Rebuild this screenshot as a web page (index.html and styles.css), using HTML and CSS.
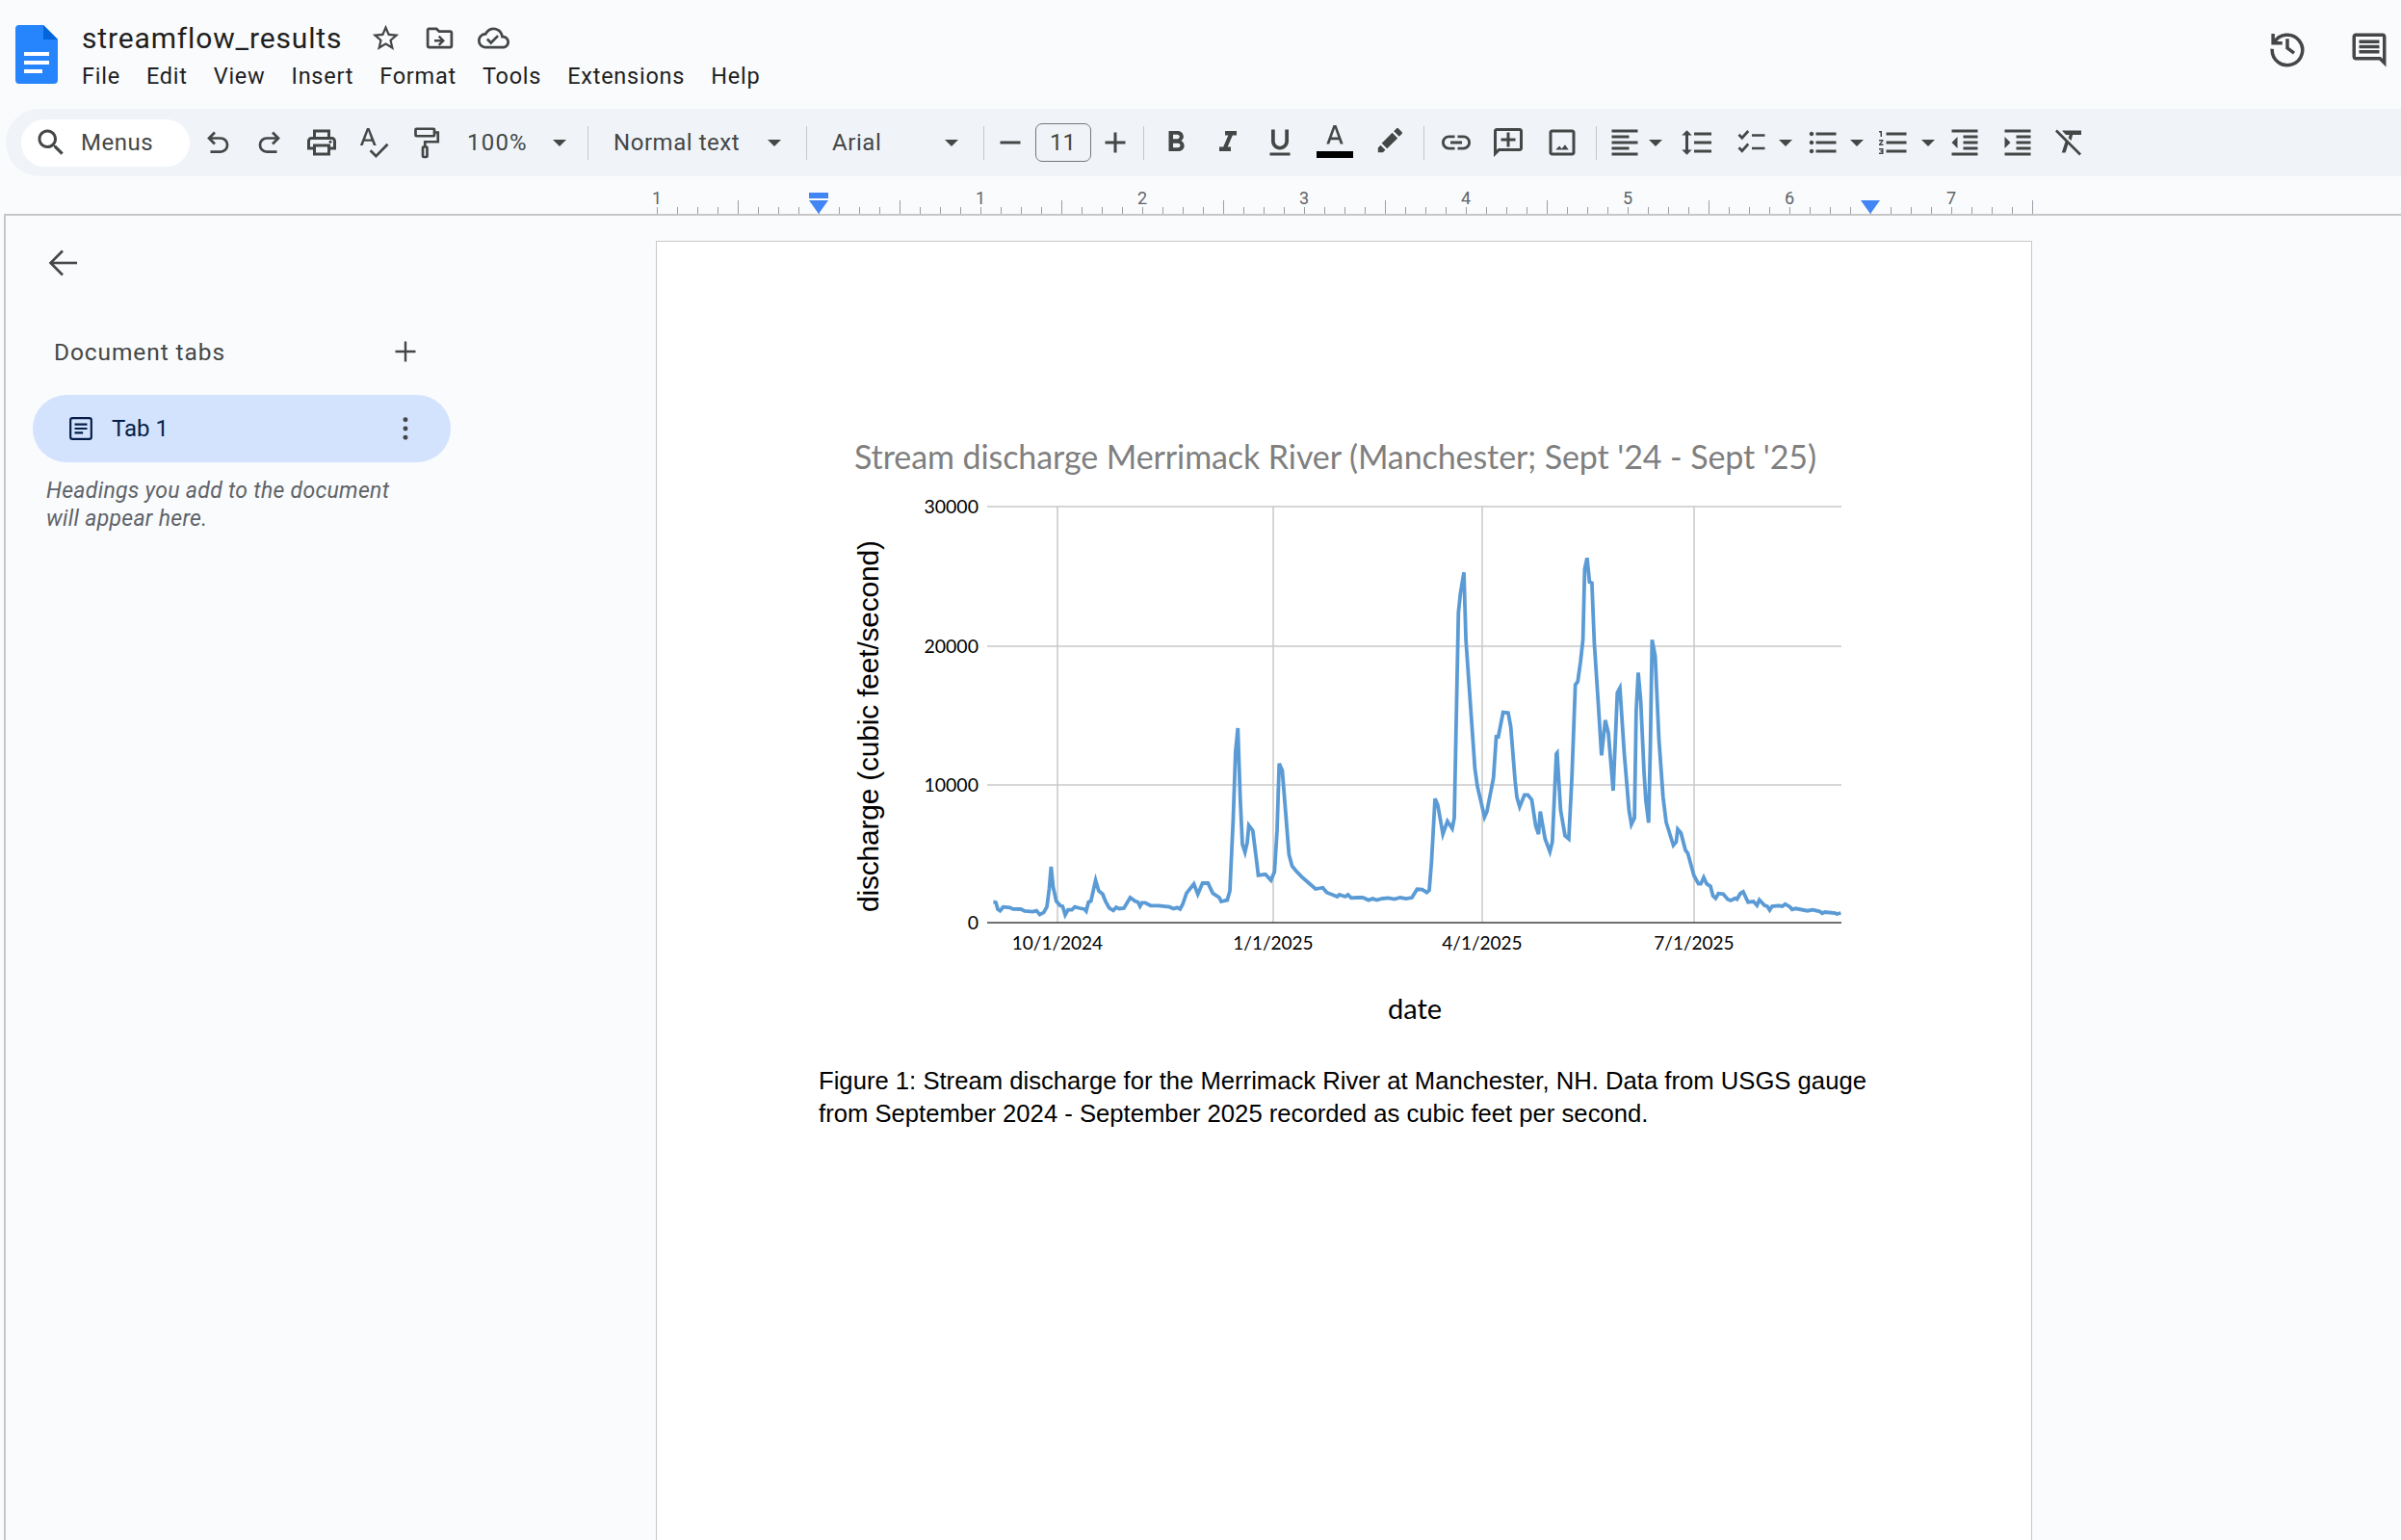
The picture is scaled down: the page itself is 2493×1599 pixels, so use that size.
FILE: index.html
```html
<!DOCTYPE html>
<html lang="en">
<head>
  <meta charset="UTF-8" />
  <title>streamflow_results</title>
  <link rel="stylesheet" href="styles.css">
</head>
<body>
  <header class="topbar">
    <svg class="doc-logo" viewBox="0 0 44 61">
      <path d="M4 0h25l15 15v42a4 4 0 0 1-4 4H4a4 4 0 0 1-4-4V4a4 4 0 0 1 4-4z" fill="#2684fc"/>
      <path d="M29 0l15 15H29z" fill="#0066da"/>
      <rect x="9" y="28" width="26" height="4" fill="#fff"/>
      <rect x="9" y="37" width="26" height="4" fill="#fff"/>
      <rect x="9" y="46" width="19" height="4" fill="#fff"/>
    </svg>
    <div class="title-block">
      <div class="title-row">
        <span class="doc-title">streamflow_results</span>
        <svg class="title-icon" viewBox="0 0 24 24"><path d="M22 9.24l-7.19-.62L12 2 9.19 8.63 2 9.24l5.46 4.73L5.82 21 12 17.27 18.18 21l-1.63-7.03L22 9.24zM12 15.4l-3.76 2.27 1-4.28-3.32-2.88 4.38-.38L12 6.1l1.71 4.04 4.38.38-3.32 2.88 1 4.28L12 15.4z"/></svg>
        <svg class="title-icon" viewBox="0 0 24 24"><path d="M20 6h-8l-2-2H4c-1.1 0-2 .9-2 2v12c0 1.1.9 2 2 2h16c1.1 0 2-.9 2-2V8c0-1.1-.9-2-2-2zm0 12H4V6h5.17l2 2H20v10z"/><path d="M12 10l-1.2 1.2 1.9 1.9H8v1.8h4.7l-1.9 1.9L12 18l4-4z"/></svg>
        <svg class="title-icon" viewBox="0 0 24 24"><path d="M19.35 10.04C18.67 6.59 15.64 4 12 4 9.11 4 6.6 5.64 5.35 8.04 2.34 8.36 0 10.91 0 14c0 3.31 2.69 6 6 6h13c2.76 0 5-2.24 5-5 0-2.64-2.05-4.78-4.65-4.96zM19 18H6c-2.21 0-4-1.79-4-4 0-2.05 1.53-3.76 3.56-3.97l1.07-.11.5-.95C8.08 7.14 9.94 6 12 6c2.62 0 4.88 1.86 5.39 4.43l.3 1.5 1.53.11c1.56.1 2.78 1.41 2.78 2.96 0 1.65-1.35 3-3 3zm-9-3.82l-2.09-2.09L6.5 13.5 10 17l6.01-6.01-1.41-1.41z"/></svg>
      </div>
      <nav class="menu">
        <span>File</span><span>Edit</span><span>View</span><span>Insert</span><span>Format</span><span>Tools</span><span>Extensions</span><span>Help</span>
      </nav>
    </div>
    <div class="top-right">
      <svg class="top-icon line" viewBox="0 0 24 24" stroke-width="2"><path d="M3.5 4v5.5H9"/><path d="M4 9.5A9 9 0 1 1 3 13"/><path d="M12 7v5.5l4 3"/></svg>
      <svg class="top-icon" viewBox="0 0 24 24"><path d="M21.99 4c0-1.1-.89-2-1.99-2H4c-1.1 0-2 .9-2 2v12c0 1.1.9 2 2 2h14l4 4-.01-18zM20 4v13.17L18.83 16H4V4h16zM6 12h12v2H6zm0-3h12v2H6zm0-3h12v2H6z"/></svg>
    </div>
  </header>

  <div class="toolbar">
    <div class="menus-pill">
      <svg class="icon" viewBox="0 0 24 24"><path d="M15.5 14h-.79l-.28-.27C15.41 12.59 16 11.11 16 9.5 16 5.91 13.09 3 9.5 3S3 5.91 3 9.5 5.91 16 9.5 16c1.61 0 3.09-.59 4.23-1.57l.27.28v.79l5 4.99L20.49 19l-4.99-5zm-6 0C7.01 14 5 11.99 5 9.5S7.01 5 9.5 5 14 7.01 14 9.5 11.99 14 9.5 14z"/></svg>
      <span>Menus</span>
    </div>
    <div class="tb"><svg class="icon line" viewBox="0 0 24 24" stroke-width="1.8"><path d="M10 5L6 9l4 4"/><path d="M6 9h8a4.7 4.7 0 0 1 0 9.4H7"/></svg></div>
    <div class="tb"><svg class="icon line" viewBox="0 0 24 24" stroke-width="1.8"><path d="M14 5l4 4-4 4"/><path d="M18 9h-8a4.7 4.7 0 0 0 0 9.4h7"/></svg></div>
    <div class="tb"><svg class="icon" viewBox="0 0 24 24"><path d="M19 8h-1V3H6v5H5c-1.66 0-3 1.34-3 3v6h4v4h12v-4h4v-6c0-1.66-1.34-3-3-3zM8 5h8v3H8V5zm8 12v2H8v-4h8v2zm2-2v-2H6v2H4v-4c0-.55.45-1 1-1h14c.55 0 1 .45 1 1v4h-2z"/><circle cx="18" cy="11.5" r="1"/></svg></div>
    <div class="tb"><svg class="icon" viewBox="0 0 24 24"><path d="M11.9 14h1.9L9 2H7.3L2.6 14h1.9l1-2.8h5.3zM6.1 9.6L8.2 4l2 5.6zM21 12.5l-7.4 7.6-3.2-3.3-1.3 1.3 4.5 4.6 8.7-8.9z"/></svg></div>
    <div class="tb"><svg class="icon line" viewBox="0 0 24 24" stroke-width="1.8"><rect x="5" y="2.5" width="13" height="5" rx=".6"/><path d="M18 5h2.5v6.5H11.5V15"/><rect x="10" y="15" width="3" height="7" rx=".6"/></svg></div>
    <div class="select select-zoom"><span>100%</span><i class="caret"></i></div>
    <i class="sep"></i>
    <div class="select select-style"><span>Normal text</span><i class="caret"></i></div>
    <i class="sep"></i>
    <div class="select select-font"><span>Arial</span><i class="caret"></i></div>
    <i class="sep"></i>
    <div class="font-size">
      <svg class="icon" viewBox="0 0 24 24"><path d="M5 11h14v2H5z"/></svg>
      <span class="size-box">11</span>
      <svg class="icon" viewBox="0 0 24 24"><path d="M19 13h-6v6h-2v-6H5v-2h6V5h2v6h6v2z"/></svg>
    </div>
    <i class="sep"></i>
    <div class="tb"><svg class="icon" viewBox="0 0 24 24"><path d="M15.6 10.79c.97-.67 1.65-1.77 1.65-2.79 0-2.26-1.75-4-4-4H7v14h7.04c2.09 0 3.71-1.7 3.71-3.79 0-1.52-.86-2.82-2.15-3.42zM10 6.5h3c.83 0 1.5.67 1.5 1.5s-.67 1.5-1.5 1.5h-3v-3zm3.5 9H10v-3h3.5c.83 0 1.5.67 1.5 1.5s-.67 1.5-1.5 1.5z"/></svg></div>
    <div class="tb"><svg class="icon" viewBox="0 0 24 24"><path d="M10 4v3h2.21l-3.42 8H6v3h8v-3h-2.21l3.42-8H18V4z"/></svg></div>
    <div class="tb"><svg class="icon" viewBox="0 0 24 24"><path d="M12 17c3.31 0 6-2.69 6-6V3h-2.5v8c0 1.93-1.57 3.5-3.5 3.5S8.5 12.93 8.5 11V3H6v8c0 3.31 2.69 6 6 6zm-7 2v2h14v-2H5z"/></svg></div>
    <div class="tb text-color">
      <svg class="icon" viewBox="0 0 24 24"><path d="M11 2L6.2 15h2l1-2.9h5.6l1 2.9h2L13 2h-2zm-1.2 8.4L12 4.2l2.2 6.2H9.8z"/></svg>
      <i class="color-bar"></i>
    </div>
    <div class="tb tb-pen"><svg class="icon" viewBox="0 0 24 24"><path d="M13.06 5.19l3.75 3.75L9.5 16.2l-3.7-3.7zm4.82 2.68l-3.75-3.75 1.83-1.83c.39-.39 1.02-.39 1.41 0l2.34 2.34c.39.39.39 1.02 0 1.41zM5 13.8l3.3 3.3L6.6 18.8H3.2v-3.2z"/></svg></div>
    <i class="sep sep-pen"></i>
    <div class="tb"><svg class="icon" viewBox="0 0 24 24"><path d="M3.9 12c0-1.71 1.39-3.1 3.1-3.1h4V7H7c-2.76 0-5 2.24-5 5s2.24 5 5 5h4v-1.9H7c-1.71 0-3.1-1.39-3.1-3.1zM8 13h8v-2H8v2zm9-6h-4v1.9h4c1.71 0 3.1 1.39 3.1 3.1s-1.39 3.1-3.1 3.1h-4V17h4c2.76 0 5-2.24 5-5s-2.24-5-5-5z"/></svg></div>
    <div class="tb"><svg class="icon" viewBox="0 0 24 24"><path d="M20 2H4c-1.1 0-2 .9-2 2v18l4-4h14c1.1 0 2-.9 2-2V4c0-1.1-.9-2-2-2zm0 14H5.17L4 17.17V4h16v12zM11 5h2v4h4v2h-4v4h-2v-4H7V9h4z"/></svg></div>
    <div class="tb tb-image"><svg class="icon" viewBox="0 0 24 24"><path d="M19 3H5c-1.1 0-2 .9-2 2v14c0 1.1.9 2 2 2h14c1.1 0 2-.9 2-2V5c0-1.1-.9-2-2-2zm0 16H5V5h14v14zm-5-5.5l-2.3 2.8-1.6-1.9L7.5 17h9z"/></svg></div>
    <i class="sep sep-image"></i>
    <div class="tb-drop drop-align"><svg class="icon" viewBox="0 0 24 24"><path d="M15 15H3v2h12v-2zm0-8H3v2h12V7zM3 13h18v-2H3v2zm0 8h18v-2H3v2zM3 3v2h18V3H3z"/></svg><i class="caret"></i></div>
    <div class="tb"><svg class="icon" viewBox="0 0 24 24"><path d="M6 7h2.5L5 3.5 1.5 7H4v10H1.5L5 20.5 8.5 17H6V7zm4-2v2h12V5H10zm0 14h12v-2H10v2zm0-6h12v-2H10v2z"/></svg></div>
    <div class="tb-drop drop-check"><svg class="icon line" viewBox="0 0 24 24" stroke-width="1.8"><path d="M3 6.5l2.2 2.3L9.5 4"/><path d="M3 15.5l2.2 2.3L9.5 13"/><path d="M12 7h9M12 16h9"/></svg><i class="caret"></i></div>
    <div class="tb-drop drop-bullet"><svg class="icon" viewBox="0 0 24 24"><path d="M4 10.5c-.83 0-1.5.67-1.5 1.5s.67 1.5 1.5 1.5 1.5-.67 1.5-1.5-.67-1.5-1.5-1.5zm0-6c-.83 0-1.5.67-1.5 1.5S3.17 7.5 4 7.5 5.5 6.83 5.5 6 4.83 4.5 4 4.5zm0 12c-.83 0-1.5.68-1.5 1.5s.68 1.5 1.5 1.5 1.5-.68 1.5-1.5-.67-1.5-1.5-1.5zM7 19h14v-2H7v2zm0-6h14v-2H7v2zm0-8v2h14V5H7z"/></svg><i class="caret"></i></div>
    <div class="tb-drop drop-num"><svg class="icon" viewBox="0 0 24 24"><path d="M2 17h2v.5H3v1h1v.5H2v1h3v-4H2v1zm1-9h1V4H2v1h1v3zm-1 3h1.8L2 13.1v.9h3v-1H3.2L5 10.9V10H2v1zm5-6v2h14V5H7zm0 14h14v-2H7v2zm0-6h14v-2H7v2z"/></svg><i class="caret"></i></div>
    <div class="tb"><svg class="icon" viewBox="0 0 24 24"><path d="M11 17h10v-2H11v2zm-8-5l4 4V8l-4 4zm0 9h18v-2H3v2zM3 3v2h18V3H3zm8 6h10V7H11v2zm0 4h10v-2H11v2z"/></svg></div>
    <div class="tb tb-indent"><svg class="icon" viewBox="0 0 24 24"><path d="M3 21h18v-2H3v2zM3 8v8l4-4-4-4zm8 9h10v-2H11v2zM3 3v2h18V3H3zm8 6h10V7H11v2zm0 4h10v-2H11v2z"/></svg></div>
    <div class="tb"><svg class="icon" viewBox="0 0 24 24"><path d="M3.27 3L2 4.27l7 7L6.5 19h2.6l1.8-5.8L18.73 21 20 19.73z"/><path d="M7 3.6v.6l2.4 2.4h2.4l-.7 2.2 1.9 1.9 1.1-4.1H20V3.6z"/></svg></div>
  </div>

  <div class="ruler">
    <div class="ruler-scale">
      <div class="ruler-nums">
        <span>1</span><span></span><span>1</span><span>2</span><span>3</span><span>4</span><span>5</span><span>6</span><span>7</span>
      </div>
      <div class="ticks"></div>
      <svg class="marker marker-left" viewBox="0 0 20 22"><rect width="20" height="6" fill="#4285f4"/><path d="M0 8h20L10 22z" fill="#4285f4"/></svg>
      <svg class="marker marker-right" viewBox="0 0 20 14"><path d="M0 0h20L10 14z" fill="#4285f4"/></svg>
    </div>
  </div>

  <main class="workspace">
    <aside class="sidebar">
      <svg class="back-arrow line" viewBox="0 0 30 28" stroke-width="2.6"><path d="M15 1.5L2.5 14 15 26.5"/><path d="M3 14h27"/></svg>
      <div class="tabs-head">
        <span>Document tabs</span>
        <svg class="icon" viewBox="0 0 24 24"><path d="M19 12.8h-6.2V19h-1.6v-6.2H5v-1.6h6.2V5h1.6v6.2H19z"/></svg>
      </div>
      <div class="tab-pill">
        <svg class="tab-doc line" viewBox="0 0 24 24" stroke-width="2"><rect x="2" y="2" width="20" height="20" rx="2"/><path d="M6 8h12M6 12h12M6 16h8"/></svg>
        <span class="tab-name">Tab 1</span>
        <svg class="tab-dots" viewBox="0 0 6 26"><circle cx="3" cy="3" r="2.7"/><circle cx="3" cy="13" r="2.7"/><circle cx="3" cy="23" r="2.7"/></svg>
      </div>
      <p class="tabs-hint">Headings you add to the document will appear here.</p>
    </aside>

    <section class="page">
      <svg class="chart" viewBox="850 450 1092 654">
        <text class="chart-title" x="887" y="486" textLength="999">Stream discharge Merrimack River (Manchester; Sept '24 - Sept '25)</text>
        <g class="grid">
          <path d="M1025 525H1912M1025 670H1912M1025 814H1912"/>
          <path d="M1098 525V957M1322 525V957M1539 525V957M1759 525V957"/>
        </g>
        <path class="axis" d="M1025 957H1912"/>
        <g class="y-labels">
          <text x="1016" y="532">30000</text>
          <text x="1016" y="677">20000</text>
          <text x="1016" y="821">10000</text>
          <text x="1016" y="964">0</text>
        </g>
        <g class="x-labels">
          <text x="1098" y="985">10/1/2024</text>
          <text x="1322" y="985">1/1/2025</text>
          <text x="1539" y="985">4/1/2025</text>
          <text x="1759" y="985">7/1/2025</text>
        </g>
        <text class="y-title" transform="translate(912 946) rotate(-90)" textLength="386">discharge (cubic feet/second)</text>
        <text class="x-title" x="1469" y="1057">date</text>
        <polyline class="flow" points="1031.4,935.4 1034,936 1036,943 1038.4,944.6 1041.6,940.7 1048.6,941.4 1051.8,942.9 1060,943 1064,945 1072.2,945.7 1076.3,944.6 1079.6,948.6 1083.7,946.4 1087,940.7 1089.4,922 1091.4,899 1093.5,920 1096.7,934.6 1100.8,939.3 1103.3,940 1106,949 1109,943.6 1113,943.6 1116,940.7 1121.2,942 1126,943 1127.8,945 1130.2,935.7 1132.7,934.6 1137.6,913 1140.8,924 1145,927.5 1147.8,934.6 1151.8,941.8 1156,944.3 1159,941 1162,942.5 1167,942 1173.5,931 1178.4,934.6 1181.6,935.7 1183.7,940 1185.7,936.4 1189,936.4 1194.7,939.3 1202.9,939.3 1214.3,940.7 1218.4,942.5 1222.4,941.4 1225.3,942.9 1228,938 1232,926.4 1239.6,916.8 1243.7,927.5 1248.6,916 1254.3,916 1259.2,926.4 1266,931 1268,935 1274.3,933.6 1277,924 1280.4,850.7 1282.9,779.3 1285.3,755 1287.8,829.3 1290,875.7 1292.7,884 1295,874 1296.7,856 1300.8,861.4 1305,895 1306.5,907.9 1313.9,906.8 1319.6,913 1323.3,904.3 1326,861.4 1328.2,791.8 1331.4,799 1334.7,840 1338.4,886.4 1341.6,898.2 1345.7,903.2 1351.8,909.6 1358.8,915.7 1366,922 1373.5,920.7 1377.6,925.7 1388.6,930 1390.6,927.9 1396.7,930 1399.6,927.9 1402.9,931.4 1409,931 1415,931 1421,933.6 1425.3,932 1429.4,933.6 1435.5,932 1441.6,931.4 1447.8,932.5 1453.9,931 1460,932 1466,931 1471.4,922.3 1476.8,922.7 1481.4,925.7 1484,923.3 1486.4,893.3 1490,828.3 1492.9,835 1498.2,865 1502.9,851.7 1507.9,859.3 1510,848.3 1514.3,635 1516.4,615 1520,593.3 1522.1,663.3 1527.9,746.7 1531.4,796.7 1533.9,815 1541.4,847.3 1543.9,841.7 1550.7,806.7 1553.6,764 1555.7,764 1560.7,738.7 1566,739.3 1568.6,753.3 1573.2,810 1575,826.7 1577.9,836.7 1582.9,824.3 1586.4,824.3 1590.4,829.3 1594.6,856.7 1597.5,865 1599.3,841.7 1604.3,870 1609.3,883.3 1611.8,873.3 1616,781.7 1616.8,780.7 1620.4,840 1625,866.7 1628.9,870 1632.1,806.7 1635.7,710 1638.2,706.7 1641,686.7 1643.6,663.3 1645.4,590 1647.9,578.3 1650.4,603.3 1652.9,604.3 1655.4,666.7 1658.9,720 1662.9,783.3 1666.8,746.7 1670,760 1675,820 1679.3,718.3 1682,713.3 1686.4,780 1691.4,840 1693.9,855 1697.1,848.3 1698.9,736.7 1701,697.3 1703.6,726.7 1707,800 1708.9,830 1711.8,853.3 1713.6,773.3 1715.4,663.3 1718.6,680 1722.5,766.7 1726.8,826.7 1730,852.7 1737.5,876.7 1740.4,873.3 1742,860 1745.4,864 1750,881.7 1752.5,885 1758.9,908.3 1763.6,916.7 1766,916.7 1769,910 1772.1,916.7 1776,919.3 1778.6,929.3 1781.4,931.7 1784.3,926.7 1789.3,927.3 1793.9,932.7 1797,934 1801.8,931.7 1803.6,932.7 1807,926.7 1810,925 1815,935.7 1820.7,935 1824.3,939 1826.8,933.3 1832.1,939 1835,940 1837.5,944 1840,940 1846.4,939.3 1850.7,940 1853.6,937.7 1858.9,941 1860.7,943.3 1864.3,942.3 1876.8,944.7 1882,943.7 1889.3,945.3 1892,947.3 1894.6,946 1905.4,947 1907,948 1911.4,947"/>
      </svg>
      <p class="caption">Figure 1: Stream discharge for the Merrimack River at Manchester, NH. Data from USGS gauge from September 2024 - September 2025 recorded as cubic feet per second.</p>
    </section>
  </main>
</body>
</html>
```

FILE: styles.css
```css
* {
  box-sizing: border-box;
}
html, body {
  margin: 0;
  height: 100%;
}
body {
  width: 2493px;
  height: 1599px;
  overflow: hidden;
  display: flex;
  flex-direction: column;
  background: #f9fbfd;
  color: #444746;
  font-family: Roboto, "Open Sans", sans-serif;
}
svg {
  display: block;
  fill: #444746;
}
svg.line {
  fill: none;
  stroke: #444746;
}
i {
  display: block;
}

/* top bar */
.topbar {
  height: 113px;
  flex: none;
  display: flex;
  padding: 26px 0 0 16px;
}
.doc-logo {
  width: 44px;
  height: 61px;
  flex: none;
}
.title-block {
  margin-left: 25px;
  margin-top: -9px;
}
.title-row {
  display: flex;
  align-items: center;
  height: 44px;
}
.doc-title {
  font-size: 30px;
  color: #1f1f1f;
  letter-spacing: 0.85px;
  width: 269px;
  white-space: nowrap;
}
.title-icon {
  width: 33px;
  height: 33px;
  margin-right: 23px;
}
.doc-title + .title-icon {
  margin-left: 30px;
}
.menu {
  display: flex;
  gap: 27px;
  font-size: 23.5px;
  color: #1f1f1f;
  margin-top: 4px;
  letter-spacing: 0.75px;
}
.top-right {
  margin-left: auto;
  display: flex;
  align-items: flex-start;
  gap: 43px;
  padding: 2px 12px 0 0;
}
.top-right .top-icon + .top-icon {
  margin-top: 3px;
}
.top-icon {
  width: 42px;
  height: 42px;
}

/* toolbar */
.toolbar {
  height: 70px;
  flex: none;
  margin-left: 6px;
  padding-left: 16px;
  display: flex;
  align-items: center;
  background: #f0f4f9;
  border-radius: 35px 0 0 35px;
  font-size: 24px;
}
.icon {
  width: 36px;
  height: 36px;
  flex: none;
}
.menus-pill {
  width: 175px;
  height: 49px;
  margin-right: 2px;
  padding-left: 13px;
  display: flex;
  align-items: center;
  gap: 13px;
  background: #fff;
  border-radius: 25px;
  letter-spacing: 0.5px;
}
.tb {
  width: 54px;
  height: 48px;
  flex: none;
  display: flex;
  align-items: center;
  justify-content: center;
  position: relative;
}
.tb-drop {
  height: 48px;
  flex: none;
  display: flex;
  align-items: center;
}
.drop-align { width: 77px; padding-left: 11px; gap: 7px; }
.drop-check { width: 81px; padding-left: 12px; gap: 10px; }
.drop-bullet { width: 75px; padding-left: 5px; gap: 10px; }
.drop-num { width: 68px; padding-left: 3px; gap: 11px; }
.caret {
  width: 0;
  height: 0;
  flex: none;
  border-left: 7px solid transparent;
  border-right: 7px solid transparent;
  border-top: 7px solid #444746;
}
.sep {
  width: 1px;
  height: 35px;
  flex: none;
  background: #c7c7c7;
}
.select {
  display: flex;
  align-items: center;
  justify-content: space-between;
  flex: none;
  letter-spacing: 0.55px;
}
.select-zoom { width: 141px; padding: 0 22px 0 16px; letter-spacing: 1.2px; }
.select-style { width: 226px; padding: 0 26px; }
.select-font { width: 183px; padding: 0 26px; }
.font-size {
  width: 165px;
  display: flex;
  align-items: center;
  justify-content: space-between;
  padding: 0 11px 0 9px;
  flex: none;
}
.size-box {
  width: 58px;
  height: 40px;
  border: 1px solid #747775;
  border-radius: 7px;
  display: flex;
  align-items: center;
  justify-content: center;
}
.text-color {
  margin-left: 3px;
}
.text-color .icon {
  margin-top: -7px;
}
.color-bar {
  position: absolute;
  left: 8px;
  top: 33px;
  width: 38px;
  height: 7px;
  background: #000;
}
.tb-pen {
  margin-left: 4px;
}
.sep-pen {
  margin-left: 7px;
}
.tb-image {
  margin-left: 2px;
}
.sep-image {
  margin-left: 8px;
}
.tb-indent {
  margin-left: 1px;
}
.toolbar > .sep + .tb {
  margin-left: 6px;
}

/* ruler */
.ruler {
  height: 39px;
  flex: none;
  padding-left: 682px;
}
.ruler-scale {
  width: 1428px;
  height: 39px;
  position: relative;
}
.ruler-nums {
  display: flex;
  margin-left: -84px;
  padding-top: 13px;
  font-size: 18px;
  line-height: 20px;
  color: #5f6368;
}
.ruler-nums span {
  width: 168px;
  height: 20px;
  text-align: center;
}
.ticks {
  position: absolute;
  left: 0;
  right: -1px;
  bottom: 0;
  height: 14px;
  background:
    repeating-linear-gradient(to right, #9aa0a6 0 1px, transparent 1px 21px) left bottom / 100% 7px no-repeat,
    repeating-linear-gradient(to right, #9aa0a6 0 1px, transparent 1px 168px) 84px bottom / 100% 14px no-repeat;
}
.marker {
  position: absolute;
  width: 20px;
}
.marker-left {
  left: 158px;
  top: 17px;
  height: 22px;
}
.marker-right {
  left: 1250px;
  top: 25px;
  height: 14px;
}

/* workspace */
.workspace {
  flex: 1;
  min-height: 0;
  display: flex;
  margin-left: 4px;
  border-top: 2px solid #c7c7c7;
  border-left: 2px solid #c7c7c7;
  position: relative;
  overflow: hidden;
}
.workspace::before {
  content: "";
  position: absolute;
  left: 844px;
  top: -2px;
  width: 1092px;
  height: 2px;
  background: #747775;
}
.sidebar {
  width: 675px;
  flex: none;
  padding-top: 35px;
}
.back-arrow {
  width: 30px;
  height: 28px;
  margin-left: 44px;
}
.tabs-head {
  display: flex;
  align-items: center;
  justify-content: space-between;
  margin: 60px 0 0 50px;
  width: 383px;
  font-size: 24.5px;
  letter-spacing: 0.9px;
}
.tab-pill {
  width: 434px;
  height: 70px;
  margin: 27px 0 0 28px;
  padding: 0 24px 0 37px;
  display: flex;
  align-items: center;
  background: #d3e3fd;
  border-radius: 35px;
}
.tab-doc {
  width: 26px;
  height: 26px;
  flex: none;
}
svg.tab-doc {
  stroke: #041e49;
}
.tab-name {
  margin-left: 19px;
  font-size: 24px;
  color: #041e49;
}
.tab-dots {
  width: 6px;
  height: 24px;
  margin-left: auto;
  margin-right: 20px;
}
.tabs-hint {
  width: 372px;
  margin: 15px 0 0 42px;
  font-size: 23px;
  line-height: 29px;
  font-style: italic;
  letter-spacing: 0.3px;
  color: #5f6368;
}

/* document page */
.page {
  width: 1429px;
  height: 1600px;
  flex: none;
  margin-top: 26px;
  padding: 200px 168px 0;
  background: #fff;
  border: 1px solid #c7c7c7;
}
.chart {
  width: 1092px;
  height: 654px;
  fill: none;
}
.chart text {
  fill: #000;
  stroke: none;
}
.chart-title {
  font-family: Lato, sans-serif;
  font-size: 34px;
}
.chart .chart-title {
  fill: #7f7f7f;
}
.grid path {
  stroke: #c9c9c9;
  stroke-width: 1.5;
}
.axis {
  stroke: #404040;
  stroke-width: 1.5;
}
.y-labels, .x-labels {
  font-family: Lato, sans-serif;
}
.y-labels {
  font-size: 19.5px;
  text-anchor: end;
}
.x-labels {
  font-size: 19px;
}
.x-labels, .x-title {
  text-anchor: middle;
}
.y-title {
  font-family: "Liberation Sans", Arial, sans-serif;
  font-size: 30px;
}
.x-title {
  font-family: Lato, sans-serif;
  font-size: 29px;
}
.flow {
  fill: none;
  stroke: #5b9bd5;
  stroke-width: 3.8;
  stroke-linejoin: miter;
}
.caption {
  margin: 0;
  font-family: "Liberation Sans", Arial, sans-serif;
  font-size: 25.67px;
  line-height: 34.4px;
  color: #000;
}
```
